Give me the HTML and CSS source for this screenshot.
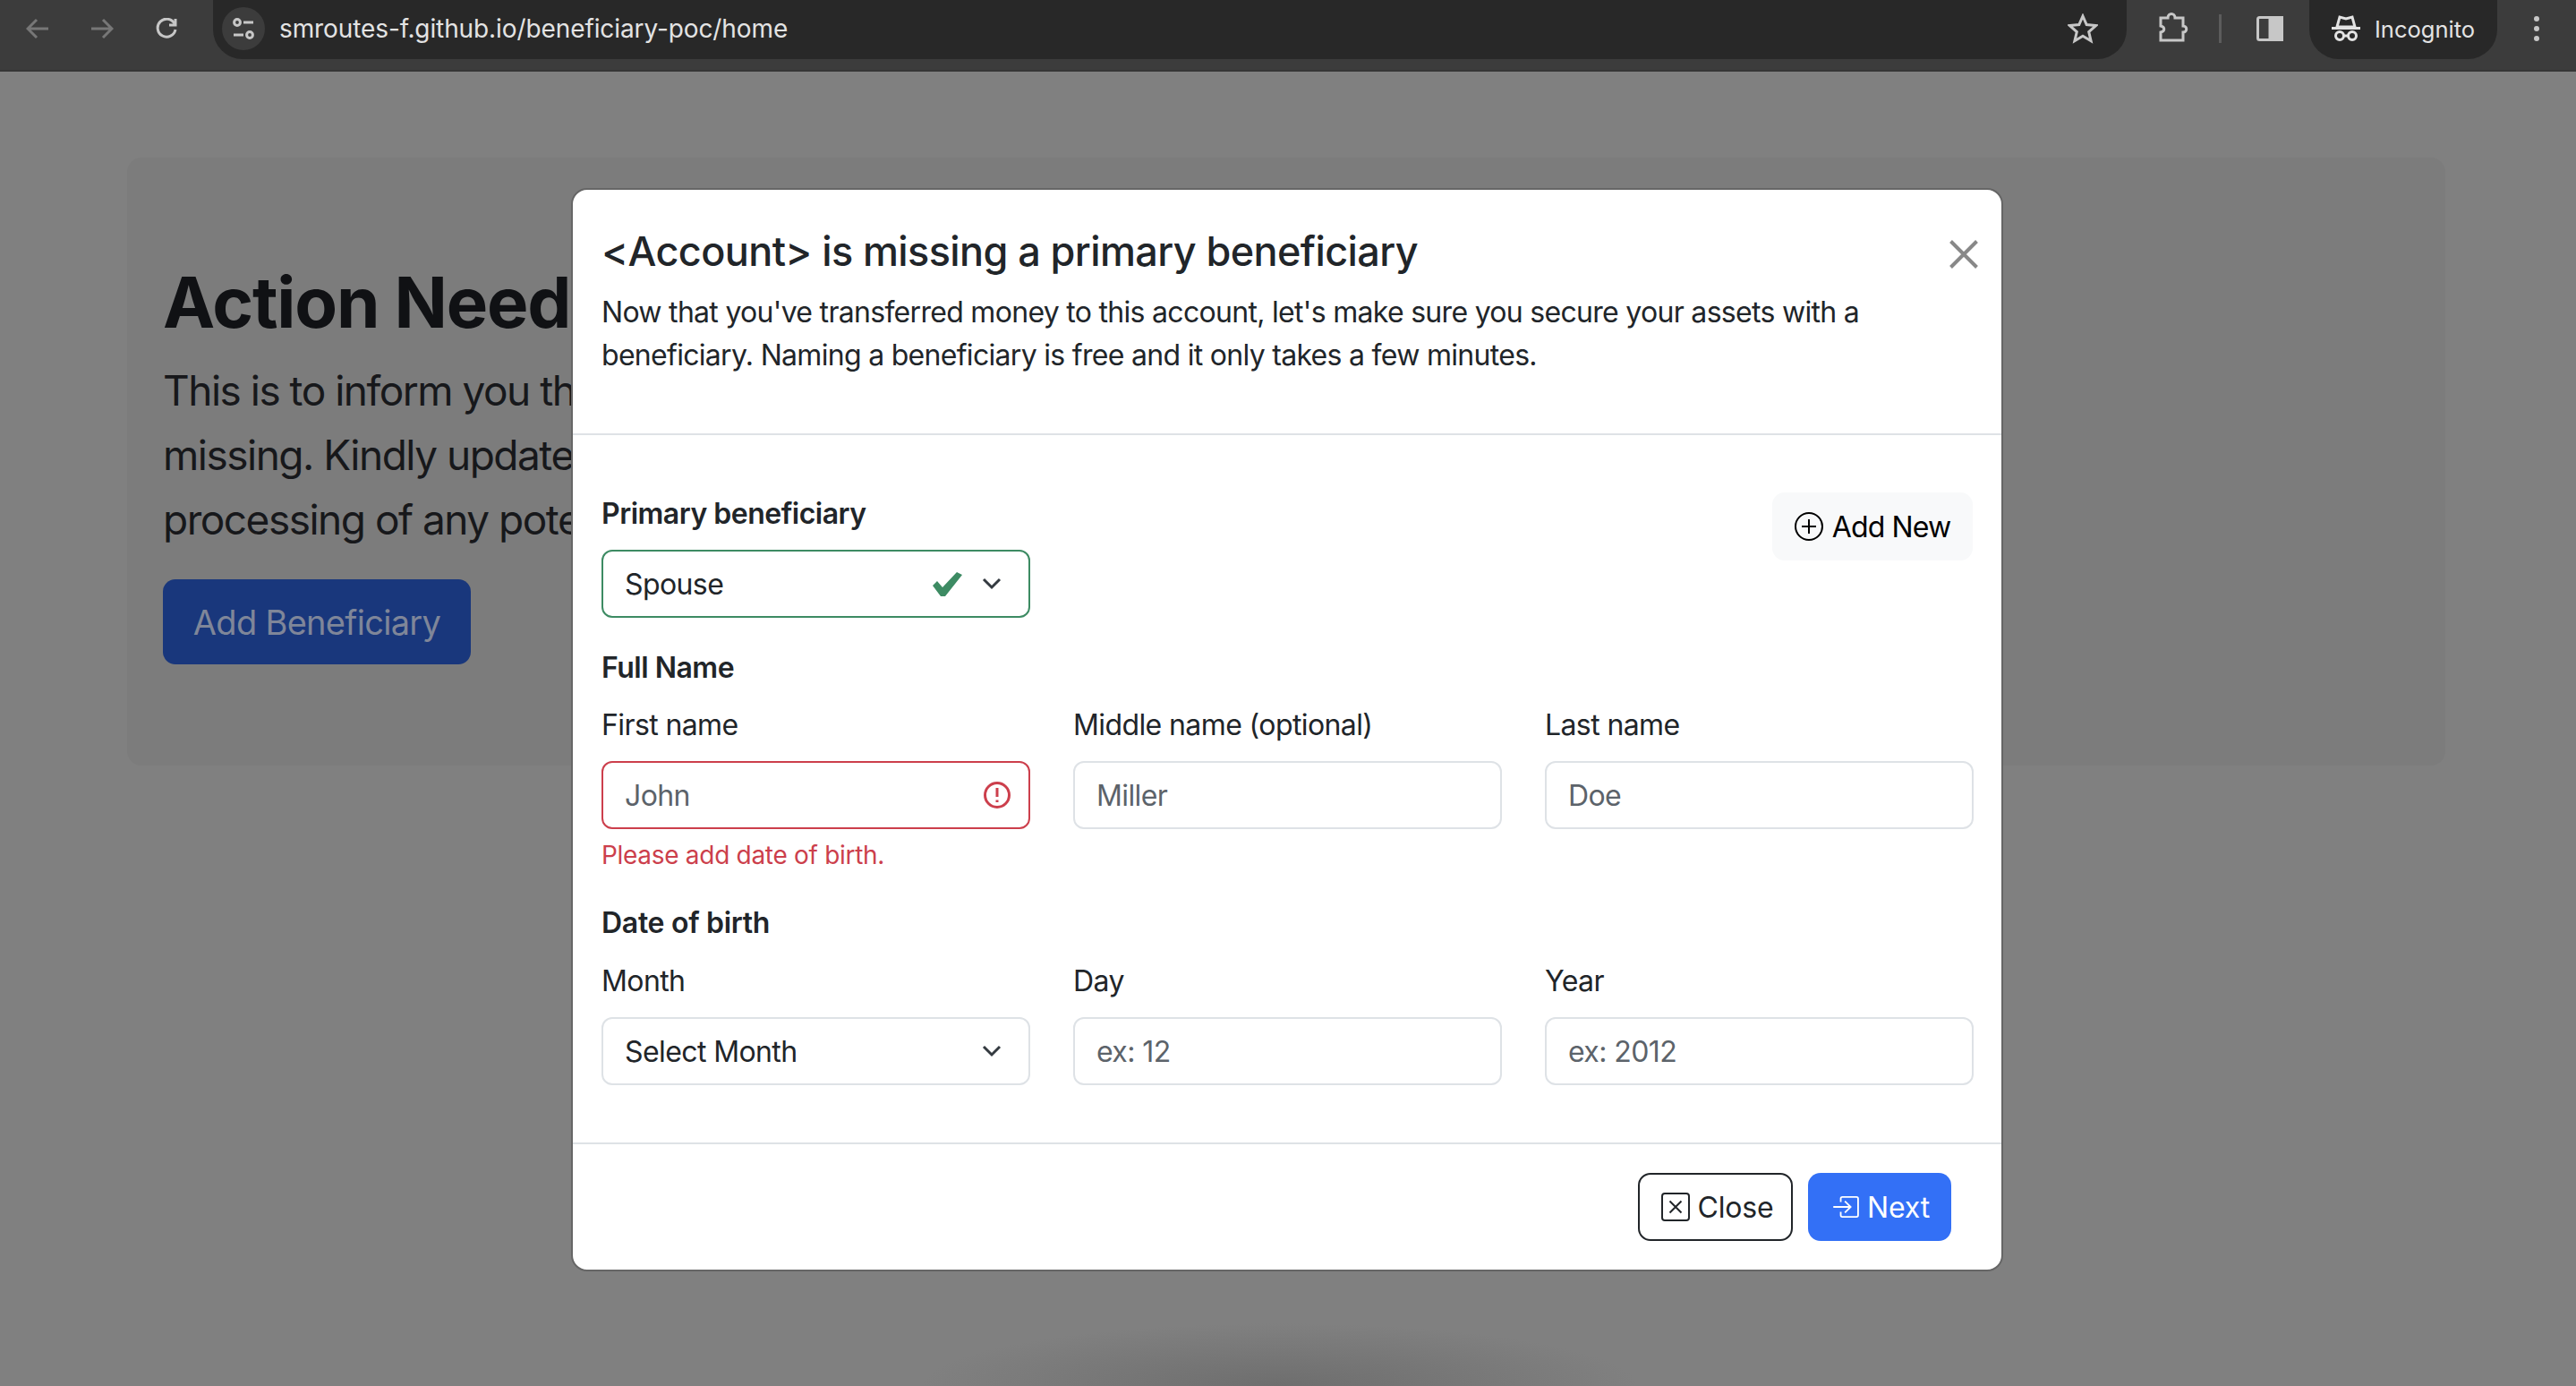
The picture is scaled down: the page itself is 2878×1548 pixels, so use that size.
FILE: index.html
```html
<!DOCTYPE html>
<html>
<head>
<title>Beneficiary POC</title>
<link rel="stylesheet" href="styles.css">
</head>
<body>

<div class="browser-bar">
  <div class="nav-icons">
    <svg class="nav-icon dim" viewBox="0 0 26 24"><path d="M25 12H3M12 2L2 12l10 10"/></svg>
    <svg class="nav-icon dim" viewBox="0 0 26 24"><path d="M1 12h22M14 2l10 10-10 10"/></svg>
    <svg class="nav-icon" viewBox="0 0 26 24"><path d="M22 6.5A10 10 0 1 0 23 13"/><path d="M23 1v7h-7" class="solid"/></svg>
  </div>
  <div class="url-pill">
    <span class="site-info">
      <svg viewBox="0 0 26 26"><circle cx="6" cy="6" r="3.4"/><path d="M13 6h11M2 20h11"/><circle cx="20" cy="20" r="3.4"/></svg>
    </span>
    <span class="url-text">smroutes-f.github.io/beneficiary-poc/home</span>
    <svg class="star" viewBox="0 0 34 34"><path d="M17 3l4.2 9.6 10.4 1-7.9 6.9 2.4 10.2-9.1-5.4-9.1 5.4 2.4-10.2-7.9-6.9 10.4-1z"/></svg>
  </div>
  <svg class="puzzle" viewBox="0 0 36 36"><path d="M4 8h8c0-6 8-6 8 0h9v9c5 0 5 7 0 7v9H4v-9c5-1 5-6 0-7z"/></svg>
  <span class="bar-divider"></span>
  <svg class="panel" viewBox="0 0 30 30"><rect x="1.5" y="2.5" width="27" height="25" rx="2"/><rect x="15" y="2.5" width="13.5" height="25" class="fill"/></svg>
  <div class="incognito">
    <svg viewBox="0 0 32 30"><path d="M0 14.5h32"/><path d="M6 13L9 2l7 2 7-2 3 11z" class="hat"/><circle cx="9" cy="23" r="4.5"/><circle cx="23" cy="23" r="4.5"/><path d="M13.5 23h5"/></svg>
    <span>Incognito</span>
  </div>
  <div class="menu-dots"><i></i><i></i><i></i></div>
</div>

<div class="page">
  <div class="notice-card">
    <h1>Action Needed</h1>
    <p>This is to inform you that a primary beneficiary on your account is<br>missing. Kindly update your beneficiary details to avoid delays in the<br>processing of any potential claim on your account.</p>
    <button class="add-beneficiary">Add Beneficiary</button>
  </div>
</div>

<div class="modal">
  <div class="modal-header">
    <div>
      <h2 class="modal-title">&lt;Account&gt; is missing a primary beneficiary</h2>
      <p class="modal-text">Now that you've transferred money to this account, let's make sure you secure your assets with a beneficiary. Naming a beneficiary is free and it only takes a few minutes.</p>
    </div>
    <svg class="modal-x" viewBox="0 0 32 32"><path d="M1.5 1.5l29 29M30.5 1.5l-29 29"/></svg>
  </div>

  <div class="modal-body">
    <div class="primary-row">
      <div class="field">
        <label class="label-strong">Primary beneficiary</label>
        <div class="box valid">
          <select class="control"><option>Spouse</option></select>
          <svg class="check" viewBox="0 0 33 27"><path d="M0 15l5-5 6 7L27 0l6 3-19 24H9z"/></svg>
          <svg class="chevron" viewBox="0 0 22 14"><path d="M2 2l9 9 9-9"/></svg>
        </div>
      </div>
      <button class="add-new">
        <svg viewBox="0 0 32 32"><circle cx="16" cy="16" r="15"/><path d="M16 8v16M8 16h16"/></svg>
        Add New
      </button>
    </div>

    <div class="label-strong section-label">Full Name</div>
    <div class="three-col">
      <div class="field">
        <label>First name</label>
        <div class="box invalid">
          <input class="control" placeholder="John">
          <svg class="alert" viewBox="0 0 30 30"><circle cx="15" cy="15" r="13.5"/><path d="M15 7v10"/><path d="M15 20.5v2.5"/></svg>
        </div>
        <div class="error-text">Please add date of birth.</div>
      </div>
      <div class="field">
        <label>Middle name (optional)</label>
        <div class="box"><input class="control" placeholder="Miller"></div>
      </div>
      <div class="field">
        <label>Last name</label>
        <div class="box"><input class="control" placeholder="Doe"></div>
      </div>
    </div>

    <div class="label-strong section-label dob">Date of birth</div>
    <div class="three-col">
      <div class="field">
        <label>Month</label>
        <div class="box">
          <select class="control"><option>Select Month</option></select>
          <svg class="chevron" viewBox="0 0 22 14"><path d="M2 2l9 9 9-9"/></svg>
        </div>
      </div>
      <div class="field">
        <label>Day</label>
        <div class="box"><input class="control" placeholder="ex: 12"></div>
      </div>
      <div class="field">
        <label>Year</label>
        <div class="box"><input class="control" placeholder="ex: 2012"></div>
      </div>
    </div>
  </div>

  <div class="modal-footer">
    <button class="btn btn-close">
      <svg viewBox="0 0 32 32"><rect x="1" y="1" width="30" height="30" rx="3"/><path d="M9.5 9.5l13 13M22.5 9.5l-13 13"/></svg>
      Close
    </button>
    <button class="btn btn-next">
      <svg viewBox="0 0 32 26"><path d="M9 7V3a2 2 0 0 1 2-2h17a2 2 0 0 1 2 2v20a2 2 0 0 1-2 2H11a2 2 0 0 1-2-2v-4"/><path d="M0 13h21M14 6l7 7-7 7"/></svg>
      Next
    </button>
  </div>
</div>

</body>
</html>
```

FILE: styles.css
```css
* { box-sizing: border-box; }
html, body { height: 100%; }
body { margin: 0; background-color: #808080; color: #212529; font-family: 'Inter', 'Liberation Sans', sans-serif; overflow: hidden; position: relative; display: flex; flex-direction: column; }
button, input, select { font-family: inherit; letter-spacing: inherit; }

/* Browser toolbar */
.browser-bar { height: 80px; flex: none; display: flex; align-items: flex-start; padding-left: 29px; background-color: #3c3c3c; border-bottom: 2px solid #363636; color: #e3e3e3; }
.nav-icons { display: flex; gap: 46px; padding-top: 20px; width: 209px; }
.nav-icon { width: 26px; height: 24px; flex: none; fill: none; stroke: #c7c7c7; stroke-width: 3; }
.nav-icon.dim { stroke: #777; }
.url-pill { width: 2138px; height: 66px; flex: none; display: flex; align-items: center; background-color: #282828; border-radius: 0 0 33px 33px; padding: 0 32px 2px 10px; }
.site-info { width: 48px; height: 48px; border-radius: 50%; background-color: #3c3c3c; display: flex; align-items: center; justify-content: center; flex: none; }
.site-info svg { width: 26px; height: 26px; fill: none; stroke: #c7c7c7; stroke-width: 3; }
.url-text { margin-left: 16px; font-size: 28px; letter-spacing: -0.1px; flex: 1; }
.star { width: 34px; height: 34px; fill: none; stroke: #c7c7c7; stroke-width: 3; }
.puzzle { width: 36px; height: 36px; flex: none; margin: 12px 0 0 34px; fill: none; stroke: #c7c7c7; stroke-width: 3; }
.bar-divider { width: 3px; height: 32px; background-color: #5c5c5c; margin: 16px 0 0 33px; flex: none; }
.panel { width: 30px; height: 30px; flex: none; margin: 17px 0 0 39px; fill: none; stroke: #c7c7c7; stroke-width: 3; }
.panel .fill { fill: #c7c7c7; }
.incognito { width: 210px; height: 66px; flex: none; margin-left: 29px; display: flex; align-items: center; padding: 0 0 2px 25px; gap: 16px; background-color: #282828; border-radius: 0 0 33px 33px; font-size: 25.5px; }
.incognito svg { width: 32px; height: 30px; fill: none; stroke: #e3e3e3; stroke-width: 3; }
.incognito .hat { fill: #282828; stroke-width: 3; }
.menu-dots { display: flex; flex-direction: column; gap: 5px; margin: 18px 0 0 41px; }
.menu-dots i { width: 6px; height: 6px; border-radius: 50%; background-color: #c7c7c7; }

/* Dimmed page behind the modal */
.page { flex: 1; padding: 96px 146px 0 142px; background: radial-gradient(ellipse 400px 70px at 1430px 100%, #6e6e6e, rgba(128, 128, 128, 0)); }
.notice-card { height: 679px; background-color: #7c7c7c; border-radius: 16px; padding: 114px 40px 0; }
.notice-card h1 { margin: 0 0 14px; font-size: 78px; line-height: 96px; font-weight: 700; letter-spacing: -1.2px; color: #101114; }
.notice-card p { margin: 0 0 31px; font-size: 46px; line-height: 72px; letter-spacing: -1.5px; color: #17181b; }
.add-beneficiary { height: 95px; width: 344px; border: none; border-radius: 14px; background-color: #19377c; color: #7f8699; font-size: 38px; letter-spacing: -0.7px; }

/* Modal */
.modal { position: absolute; top: 210px; left: 638px; width: 1600px; height: 1210px; display: flex; flex-direction: column; background-color: #fff; border: 2px solid #666; border-radius: 18px; overflow: hidden; letter-spacing: -0.6px; }
.modal-header { height: 274px; flex: none; display: flex; justify-content: space-between; padding: 39px 26px 0 32px; border-bottom: 2px solid #dee2e6; }
.modal-title { margin: 0 0 14px; font-size: 45px; line-height: 60px; font-weight: 540; letter-spacing: -0.6px; }
.modal-text { margin: 0; width: 1450px; font-size: 32px; line-height: 48px; letter-spacing: -0.7px; }
.modal-x { width: 32px; height: 32px; flex: none; margin-top: 17px; fill: none; stroke: #888; stroke-width: 4; }

.modal-body { flex: 1; padding: 64px 32px 0; font-size: 32px; line-height: 48px; }
.primary-row { display: flex; justify-content: space-between; align-items: flex-start; }
.primary-row .field { width: 479px; }
.label-strong { font-weight: 600; letter-spacing: -0.5px; }
.section-label { margin-top: 32px; margin-bottom: 16px; }
.section-label.dob { margin-top: 31px; margin-bottom: 17px; letter-spacing: -0.3px; }
.three-col { display: grid; grid-template-columns: 479px 479px 479px; column-gap: 48px; }
.field label { display: block; margin-bottom: 16px; }

.box { height: 76px; display: flex; align-items: center; border: 2px solid #dee2e6; border-radius: 12px; padding-right: 30px; }
.box.valid { border-color: #3d8b63; }
.box.invalid { border-color: #cc3f4c; padding-right: 20px; }
.control { flex: 1; min-width: 0; height: 100%; border: none; outline: none; padding: 0 0 0 24px; background: none; font-size: 32px; color: #212529; appearance: none; }
.control::placeholder { color: #5c636a; opacity: 1; }
.chevron { width: 22px; height: 14px; flex: none; fill: none; stroke: #343a40; stroke-width: 3; }
.check { width: 33px; height: 27px; flex: none; margin-right: 22px; fill: #3d8b63; }
.alert { width: 30px; height: 30px; flex: none; fill: none; stroke: #cc3f4c; stroke-width: 3; }
.error-text { margin-top: 8px; font-size: 28px; line-height: 42px; letter-spacing: -0.3px; color: #cc3f4c; }

.add-new { width: 224px; height: 76px; display: flex; align-items: center; justify-content: center; gap: 10px; border: none; border-radius: 14px; background-color: #f8f9fa; color: #000; font-size: 32px; letter-spacing: -0.9px; }
.add-new svg { width: 32px; height: 32px; fill: none; stroke: #000; stroke-width: 2; }

.modal-footer { height: 142px; flex: none; display: flex; justify-content: flex-end; gap: 17px; padding: 32px 56px 0 0; border-top: 2px solid #dee2e6; }
.btn { height: 76px; display: flex; align-items: center; justify-content: center; gap: 9px; border-radius: 14px; font-size: 32px; letter-spacing: -0.2px; }
.btn svg { flex: none; fill: none; stroke-width: 2; }
.btn-close { width: 173px; padding-left: 10px; padding-right: 6px; background-color: #fff; border: 2px solid #212529; color: #212529; }
.btn-close svg { width: 32px; height: 32px; stroke: #212529; }
.btn-next { width: 160px; padding-left: 10px; padding-right: 6px; gap: 8px; background-color: #3370f6; border: none; color: #fff; }
.btn-next svg { width: 30px; height: 24px; stroke: #fff; }
```
